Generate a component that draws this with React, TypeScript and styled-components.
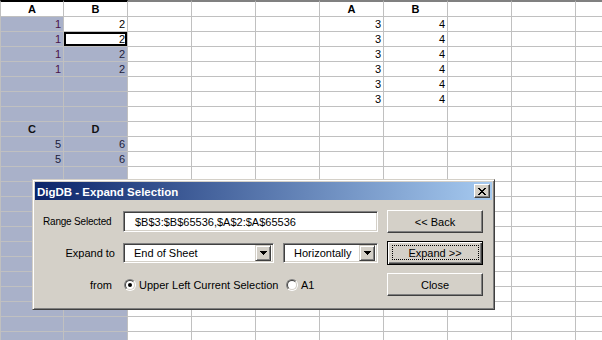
import React from 'react';
import styled, { createGlobalStyle, css } from 'styled-components';

const Global = createGlobalStyle`
  html, body { margin: 0; padding: 0; background: #fff; overflow: hidden; }
  body { width: 602px; height: 340px; font-family: "Liberation Sans", Arial, sans-serif; }
`;

const Page = styled.div`
  position: relative;
  width: 602px;
  height: 340px;
  overflow: hidden;
  background: #fff;
`;

const Sheet = styled.div`
  display: grid;
  grid-template-columns: repeat(10, 64px);
  grid-template-rows: 17px repeat(22, 15px);
`;

const Cell = styled.div<{
  $sel?: boolean;
  $active?: boolean;
  $head?: boolean;
  $first?: boolean;
  $top?: string;
  $color?: string;
}>`
  box-sizing: border-box;
  border-right: 1px solid #c0c0c0;
  border-bottom: 1px solid #c0c0c0;
  ${(p) => p.$first && css`border-left: 1px solid #c0c0c0;`}
  ${(p) => p.$top && css`border-top: 2px solid ${p.$top};`}
  background: ${(p) => (p.$sel ? '#a9b1c9' : '#fff')};
  font-family: "Liberation Sans", Arial, sans-serif;
  font-size: 11px;
  line-height: 14px;
  text-align: ${(p) => (p.$head ? 'center' : 'right')};
  font-weight: ${(p) => (p.$head ? 700 : 400)};
  padding: 0 2px;
  color: ${(p) => p.$color || '#000'};
  white-space: nowrap;
  overflow: hidden;
  ${(p) => p.$active && css`box-shadow: inset 0 0 0 2px #000;`}
`;

/* ---------- dialog ---------- */

const Dialog = styled.div`
  position: absolute;
  left: 32px;
  top: 179px;
  width: 463px;
  height: 131px;
  box-sizing: border-box;
  border: 1px solid;
  border-color: #d4d0c8 #404040 #404040 #d4d0c8;
  box-shadow: inset 1px 1px 0 #fff, inset -1px -1px 0 #808080;
  padding: 2px;
  background: #d4d0c8;
  display: flex;
  flex-direction: column;
  font-family: "Liberation Sans", Arial, sans-serif;
  font-size: 11px;
  color: #000;
`;

const TitleBar = styled.div`
  height: 18px;
  flex: none;
  display: flex;
  align-items: center;
  justify-content: space-between;
  padding: 0 2px;
  background: linear-gradient(to right, #0a246a, #a6caf0);
`;

const Title = styled.span`
  color: #fff;
  font-weight: 700;
  font-size: 11.5px;
  line-height: 18px;
  padding-top: 1px;
`;

const CloseBox = styled.div`
  width: 16px;
  height: 14px;
  box-sizing: border-box;
  background: #d4d0c8;
  border: 1px solid;
  border-color: #fff #404040 #404040 #fff;
  box-shadow: inset -1px -1px 0 #808080;
  display: flex;
  align-items: center;
  justify-content: center;
`;

const Body = styled.div`
  flex: 1;
  display: grid;
  grid-template-columns: 72px 256px 96px;
  grid-template-rows: 23px 24px 23px;
  column-gap: 8px;
  row-gap: 8px;
  padding: 10px 9px 0 8px;
`;

const Label = styled.div<{ $align?: 'start' | 'end'; $small?: boolean; $pr?: number }>`
  display: flex;
  align-items: center;
  justify-content: ${(p) => (p.$align === 'start' ? 'flex-start' : 'flex-end')};
  font-size: ${(p) => (p.$small ? '10px' : '11px')};
  letter-spacing: ${(p) => (p.$small ? '-0.2px' : '0')};
  padding-right: ${(p) => p.$pr ?? 0}px;
  white-space: nowrap;
`;

const FieldRow = styled.div`
  display: flex;
  align-items: center;
  gap: 9px;
`;

const sunken = css`
  box-sizing: border-box;
  background: #fff;
  border: 1px solid;
  border-color: #808080 #fff #fff #808080;
  box-shadow: inset 1px 1px 0 #404040, inset -1px -1px 0 #d4d0c8;
`;

const TextBox = styled.div`
  ${sunken};
  width: 255px;
  height: 21px;
  display: flex;
  align-items: center;
  padding-left: 11px;
  font-size: 11px;
  white-space: nowrap;
`;

const Select = styled.div<{ $w: number }>`
  ${sunken};
  width: ${(p) => p.$w}px;
  height: 20px;
  padding: 2px;
  display: flex;
  align-items: center;
  justify-content: space-between;
`;

const SelectText = styled.span`
  padding-left: 8px;
  font-size: 11px;
  white-space: nowrap;
`;

const ArrowButton = styled.div`
  box-sizing: border-box;
  width: 16px;
  height: 16px;
  flex: none;
  background: #d4d0c8;
  border: 1px solid;
  border-color: #d4d0c8 #404040 #404040 #d4d0c8;
  box-shadow: inset 1px 1px 0 #fff, inset -1px -1px 0 #808080;
  display: flex;
  align-items: center;
  justify-content: center;
`;

const RadioRow = styled.div`
  display: flex;
  align-items: center;
  padding-left: 1px;
`;

const RadioOption = styled.label<{ $w?: number }>`
  display: flex;
  align-items: center;
  gap: 3px;
  width: ${(p) => (p.$w ? `${p.$w}px` : 'auto')};
  flex: none;
  font-size: 11px;
  white-space: nowrap;
`;

const RadioOuter = styled.span`
  box-sizing: border-box;
  width: 12px;
  height: 12px;
  border-radius: 50%;
  border: 1px solid;
  border-color: #808080 #fff #fff #808080;
  display: flex;
  flex: none;
`;

const RadioInner = styled.span`
  box-sizing: border-box;
  flex: 1;
  border-radius: 50%;
  border: 1px solid;
  border-color: #404040 #d4d0c8 #d4d0c8 #404040;
  background: #fff;
  display: flex;
  align-items: center;
  justify-content: center;
`;

const RadioDot = styled.span`
  width: 4px;
  height: 4px;
  border-radius: 50%;
  background: #000;
`;

const Button = styled.div<{ $default?: boolean }>`
  position: relative;
  box-sizing: border-box;
  height: 100%;
  display: flex;
  align-items: center;
  justify-content: center;
  background: #d4d0c8;
  font-size: 11px;
  border: 1px solid;
  ${(p) =>
    p.$default
      ? css`
          border-color: #000;
          box-shadow: inset 1px 1px 0 #fff, inset -1px -1px 0 #404040, inset -2px -2px 0 #808080;
          &::after {
            content: '';
            position: absolute;
            left: 4px;
            right: 3px;
            top: 3px;
            bottom: 4px;
            border: 1px dotted #000;
          }
        `
      : css`
          border-color: #fff #404040 #404040 #fff;
          box-shadow: inset -1px -1px 0 #808080;
        `}
`;

const XIcon = () => (
  <svg width="8" height="7" viewBox="0 0 8 7" shapeRendering="crispEdges">
    {[
      [0, 0, 2], [6, 0, 2],
      [1, 1, 2], [5, 1, 2],
      [2, 2, 4],
      [3, 3, 2],
      [2, 4, 4],
      [1, 5, 2], [5, 5, 2],
      [0, 6, 2], [6, 6, 2],
    ].map(([x, y, w], i) => (
      <rect key={i} x={x} y={y} width={w} height={1} fill="#000" />
    ))}
  </svg>
);

const DownArrow = () => (
  <svg width="7" height="4" viewBox="0 0 7 4" shapeRendering="crispEdges">
    <rect x="0" y="0" width="7" height="1" fill="#000" />
    <rect x="1" y="1" width="5" height="1" fill="#000" />
    <rect x="2" y="2" width="3" height="1" fill="#000" />
    <rect x="3" y="3" width="1" height="1" fill="#000" />
  </svg>
);

const Radio = ({ checked }: { checked?: boolean }) => (
  <RadioOuter>
    <RadioInner>{checked && <RadioDot />}</RadioInner>
  </RadioOuter>
);

type CellData = {
  text?: string;
  head?: boolean;
  sel?: boolean;
  active?: boolean;
  color?: string;
};

function cellAt(r: number, c: number): CellData {
  const d: CellData = {};
  if (c === 0 && r >= 1) d.sel = true;
  if (c === 1 && r >= 3) d.sel = true;
  if (c === 1 && r === 2) d.active = true;
  if (r === 0) {
    if (c === 0 || c === 5) { d.text = 'A'; d.head = true; }
    if (c === 1 || c === 6) { d.text = 'B'; d.head = true; }
  }
  if (r >= 1 && r <= 4) {
    if (c === 0) { d.text = '1'; d.color = '#4a124a'; }
    if (c === 1) { d.text = '2'; d.color = d.sel ? '#1c1c3c' : '#000'; }
  }
  if (r >= 1 && r <= 6) {
    if (c === 5) d.text = '3';
    if (c === 6) d.text = '4';
  }
  if (r === 8) {
    if (c === 0) { d.text = 'C'; d.head = true; d.color = '#111'; }
    if (c === 1) { d.text = 'D'; d.head = true; d.color = '#111'; }
  }
  if (r === 9 || r === 10) {
    if (c === 0) { d.text = '5'; d.color = '#1c1c3c'; }
    if (c === 1) { d.text = '6'; d.color = '#1c1c3c'; }
  }
  return d;
}

const ROWS = 23;
const COLS = 10;

export default function App() {
  const cells: React.ReactNode[] = [];
  for (let r = 0; r < ROWS; r++) {
    for (let c = 0; c < COLS; c++) {
      const d = cellAt(r, c);
      cells.push(
        <Cell
          key={`${r}-${c}`}
          $sel={d.sel}
          $active={d.active}
          $head={d.head}
          $first={c === 0}
          $top={r === 0 ? (c < 2 ? '#000' : '#808080') : undefined}
          $color={d.color}
        >
          {d.text}
        </Cell>
      );
    }
  }

  return (
    <Page>
      <Global />
      <Sheet>{cells}</Sheet>
      <Dialog>
        <TitleBar>
          <Title>DigDB - Expand Selection</Title>
          <CloseBox>
            <XIcon />
          </CloseBox>
        </TitleBar>
        <Body>
          <Label $align="start" $small>Range Selected</Label>
          <FieldRow>
            <TextBox>$B$3:$B$65536,$A$2:$A$65536</TextBox>
          </FieldRow>
          <Button>&lt;&lt; Back</Button>

          <Label>Expand to</Label>
          <FieldRow>
            <Select $w={151}>
              <SelectText>End of Sheet</SelectText>
              <ArrowButton><DownArrow /></ArrowButton>
            </Select>
            <Select $w={95}>
              <SelectText>Horizontally</SelectText>
              <ArrowButton><DownArrow /></ArrowButton>
            </Select>
          </FieldRow>
          <Button $default>Expand &gt;&gt;</Button>

          <Label $pr={3}>from</Label>
          <RadioRow>
            <RadioOption $w={162}>
              <Radio checked />
              Upper Left Current Selection
            </RadioOption>
            <RadioOption>
              <Radio />
              A1
            </RadioOption>
          </RadioRow>
          <Button>Close</Button>
        </Body>
      </Dialog>
    </Page>
  );
}
